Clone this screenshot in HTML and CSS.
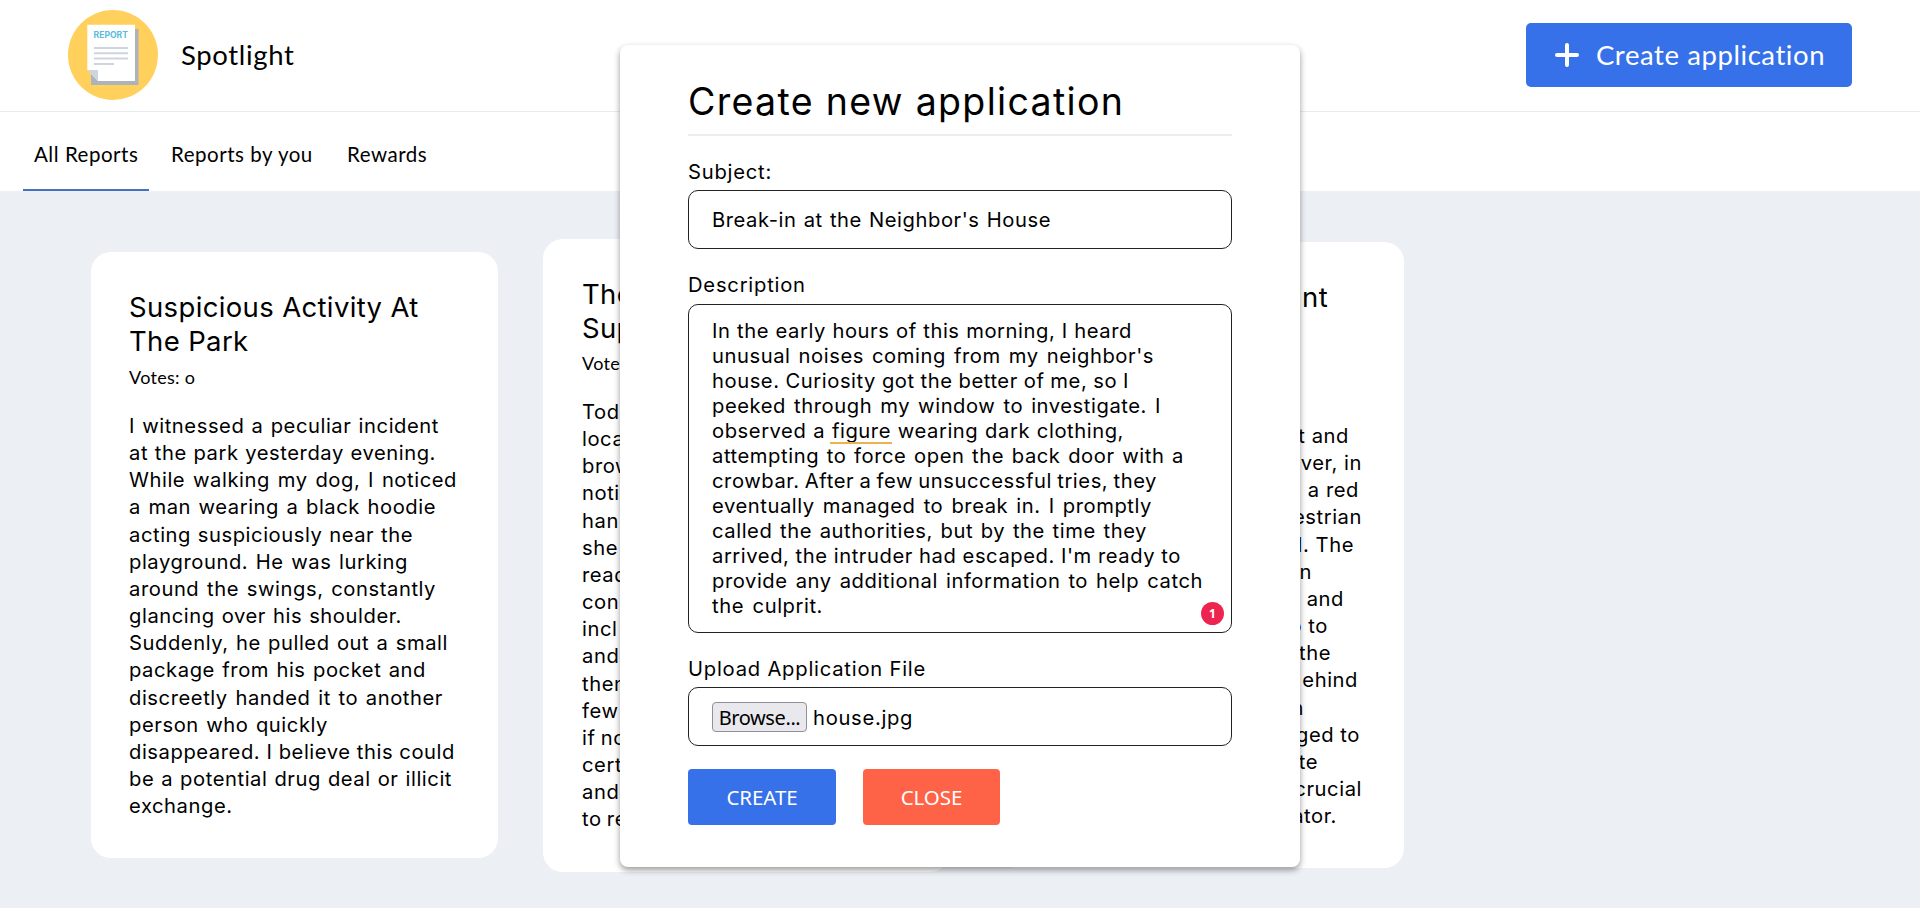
FILE: index.html
```html
<!DOCTYPE html>
<html lang="en">
<head>
<meta charset="utf-8">
<title>Spotlight</title>
<link rel="stylesheet" href="styles.css">
</head>
<body>
<header class="header">
  <div class="brand">
    <svg class="logo" viewBox="0 0 90 90">
      <circle cx="45" cy="45" r="45" fill="#ffd05b"/>
      <path d="M23 19H70.5V75H23z" fill="#acb3ba"/>
      <path d="M19.300 14.700H67V71H30L19.300 60z" fill="#fff"/>
      <path d="M19.300 60H30V71z" fill="#cdd6e0"/>
      <path d="M19.300 60V75H23V64z" fill="#ffd05b"/>
      <path d="M26 38H60M26 43.300H60M26 48.600H60M26 54H46" stroke="#cdd6e0" stroke-width="2"/>
      <text class="logo-text" x="25.500" y="28" textLength="34.500" lengthAdjust="spacingAndGlyphs">REPORT</text>
    </svg>
    <span class="brand-name">Spotlight</span>
  </div>
  <button class="new-button">
    <svg class="plus" viewBox="0 0 24 24"><path d="M12 2V22M2 12H22" stroke="#fff" stroke-width="4" stroke-linecap="round"/></svg>
    <span>Create application</span>
  </button>
</header>
<nav class="tabs">
  <a class="tab active">All Reports</a>
  <a class="tab by-you">Reports by you</a>
  <a class="tab rewards">Rewards</a>
</nav>
<main class="cards">
  <article class="card first">
    <h2 class="card-title">Suspicious Activity At<br>The Park</h2>
    <div class="votes">Votes: o</div>
    <div class="story">
      <span class="line" style="width:310px">I witnessed a peculiar incident</span>
      <span class="line" style="width:307px">at the park yesterday evening.</span>
      <span class="line" style="width:328px">While walking my dog, I noticed</span>
      <span class="line" style="width:307px">a man wearing a black hoodie</span>
      <span class="line" style="width:284px">acting suspiciously near the</span>
      <span class="line" style="width:279px">playground. He was lurking</span>
      <span class="line" style="width:307px">around the swings, constantly</span>
      <span class="line" style="width:273px">glancing over his shoulder.</span>
      <span class="line" style="width:319px">Suddenly, he pulled out a small</span>
      <span class="line" style="width:297px">package from his pocket and</span>
      <span class="line" style="width:314px">discreetly handed it to another</span>
      <span class="line" style="width:199px">person who quickly</span>
      <span class="line" style="width:326px">disappeared. I believe this could</span>
      <span class="line" style="width:323px">be a potential drug deal or illicit</span>
      <span class="line" style="width:105px">exchange.</span>
    </div>
  </article>
  <article class="card second">
    <h2 class="card-title">The<br>Sup</h2>
    <div class="votes">Votes: o</div>
    <p class="story">Tod<br>loca<br>brow<br>noti<br>han<br>she<br>read<br>con<br>incl<br>and<br>then<br>few<br>if no<br>cert<br>and<br>to re</p>
  </article>
  <article class="card third">
    <h2 class="card-title"><span class="tail" style="margin-right:38px">nt</span></h2>
    <div class="story">
      <span class="tail" style="margin-right:17px">t and</span>
      <span class="tail" style="margin-right:4px">iver, in</span>
      <span class="tail" style="margin-right:7px">n a red</span>
      <span class="tail" style="margin-right:4px">estrian</span>
      <span class="tail" style="margin-right:12px">d. The</span>
      <span class="tail" style="margin-right:54px">in</span>
      <span class="tail" style="margin-right:22px">and</span>
      <span class="tail" style="margin-right:38px">o to</span>
      <span class="tail" style="margin-right:35px">the</span>
      <span class="tail" style="margin-right:8px">ehind</span>
      <span class="tail" style="margin-right:62px">in</span>
      <span class="tail" style="margin-right:6px">ged to</span>
      <span class="tail" style="margin-right:48px">te</span>
      <span class="tail" style="margin-right:4px">crucial</span>
      <span class="tail" style="margin-right:29px">ator.</span>
    </div>
  </article>
</main>
<section class="modal">
  <h1 class="modal-title">Create new application</h1>
  <label class="label">Subject:</label>
  <div class="field subject"><span class="line" style="width:339px">Break-in at the Neighbor's House</span></div>
  <label class="label">Description</label>
  <div class="field description">
    <span class="line" style="width:420px">In the early hours of this morning, I heard</span>
    <span class="line" style="width:442px">unusual noises coming from my neighbor's</span>
    <span class="line" style="width:417px">house. Curiosity got the better of me, so I</span>
    <span class="line" style="width:449px">peeked through my window to investigate. I</span>
    <span class="line" style="width:412px">observed a <span class="flagged">figure</span> wearing dark clothing,</span>
    <span class="line" style="width:472px">attempting to force open the back door with a</span>
    <span class="line" style="width:445px">crowbar. After a few unsuccessful tries, they</span>
    <span class="line" style="width:440px">eventually managed to break in. I promptly</span>
    <span class="line" style="width:435px">called the authorities, but by the time they</span>
    <span class="line" style="width:469px">arrived, the intruder had escaped. I'm ready to</span>
    <span class="line" style="width:491px">provide any additional information to help catch</span>
    <span class="line" style="width:111px">the culprit.</span>
    <span class="badge">1</span>
  </div>
  <label class="label">Upload Application File</label>
  <div class="field upload"><span class="browse">Browse...</span><span class="file-name">house.jpg</span></div>
  <div class="actions">
    <button class="action create">CREATE</button>
    <button class="action close">CLOSE</button>
  </div>
</section>
</body>
</html>
```

FILE: styles.css
```css
* { box-sizing: border-box; }

body {
  margin: 0;
  height: 908px;
  overflow: hidden;
  background: #ecf0f5;
  color: #000;
  font-family: Inter, sans-serif;
}

.header {
  display: flex;
  justify-content: space-between;
  align-items: center;
  height: 112px;
  padding: 0 68px 2px;
  background: #fff;
  border-bottom: 1px solid #e9ebee;
}

.brand { display: flex; align-items: center; gap: 23px; }
.logo { width: 90px; height: 90px; }
.logo-text { font: 700 8.500px Inter, sans-serif; fill: #5bbcdc; }
.brand-name { font: 27.500px/34px Lato, sans-serif; letter-spacing: 0.650px; }

.new-button {
  display: flex;
  align-items: center;
  gap: 17px;
  width: 326px;
  height: 64px;
  padding: 0 0 0 29px;
  border: 0;
  border-radius: 5px;
  background: #3671e9;
  color: #fff;
  font: 27.500px/34px Lato, sans-serif;
  letter-spacing: 0.580px;
  white-space: nowrap;
}
.plus { width: 24px; height: 24px; }

.tabs {
  display: flex;
  height: 79px;
  padding-left: 23px;
  background: #fff;
  font: 20.500px/24px Lato, sans-serif;
  letter-spacing: 0.530px;
}
.tab { padding: 30px 0 0 11px; white-space: nowrap; }
.tab.active { width: 126px; border-bottom: 2px solid #4671c0; }
.tab.by-you { width: 176px; padding-left: 22px; }
.tab.rewards { padding-left: 22px; }

.cards { display: flex; align-items: flex-start; padding-left: 91px; }
.card {
  flex: none;
  width: 407px;
  padding: 38px 38px 0;
  border-radius: 20px;
  background: #fff;
  overflow: hidden;
  white-space: nowrap;
}
.first { height: 606px; margin-top: 61px; }
.second { height: 633px; margin: 48px 0 0 45px; padding-left: 39px; }
.third { height: 626px; margin: 51px 0 0 47px; }
.card-title { margin: 0 0 7px; font-size: 27.500px; line-height: 34px; font-weight: 400; letter-spacing: 0.350px; }
.second .card-title { margin-bottom: 6px; }
.votes { font: 18px/24px Lato, sans-serif; letter-spacing: 0.300px; }
.story { margin: 23px 0 0; font-size: 20.200px; line-height: 27.150px; letter-spacing: 0.560px; word-spacing: -1px; }
.third .card-title { height: 68px; }
.third .story { margin-top: 74px; }
.line { display: block; text-align: justify; text-align-last: justify; }
.tail { display: block; text-align: right; word-spacing: 0; }

.modal {
  position: absolute;
  left: 620px;
  top: 45px;
  width: 680px;
  height: 822px;
  padding: 35px 68px 0;
  border-radius: 8px;
  background: #fff;
  box-shadow: 0 3px 6px rgba(0, 0, 0, 0.400);
  white-space: nowrap;
}
.modal-title {
  margin: 0;
  height: 56px;
  border-bottom: 2px solid #ededed;
  font-size: 37.500px;
  line-height: 44px;
  font-weight: 400;
  letter-spacing: 1.330px;
}
.label { display: block; margin-top: 23px; font-size: 20.200px; line-height: 25px; letter-spacing: 0.780px; }
.field {
  position: relative;
  margin-top: 6px;
  padding: 0 23px;
  border: 1px solid #222;
  border-radius: 10px;
  font-size: 20.200px;
  line-height: 25px;
  letter-spacing: 0.560px;
  word-spacing: -1px;
}
.subject { height: 59px; padding-top: 16px; }
.description { height: 329px; margin-top: 7px; padding-top: 13px; }
.flagged { position: relative; }
.flagged::after {
  content: "";
  position: absolute;
  left: -2px;
  right: -1px;
  bottom: -1px;
  height: 2px;
  background: #eeb150;
}
.badge {
  position: absolute;
  right: 7px;
  bottom: 7px;
  width: 23px;
  height: 23px;
  border-radius: 50%;
  background: #ee2450;
  color: #fff;
  font: 700 12px/23px "Open Sans", sans-serif;
  letter-spacing: 0;
  text-align: center;
}
.upload { display: flex; align-items: center; gap: 6px; height: 59px; }
.file-name { padding-top: 2px; letter-spacing: 0.700px; }
.browse {
  width: 95px;
  height: 30px;
  border: 1px solid #8f8f9d;
  border-radius: 4px;
  background: #e9e9ed;
  font: 20px/29px "Noto Sans", sans-serif;
  letter-spacing: -0.400px;
  text-align: center;
}
.actions { display: flex; gap: 27px; margin-top: 23px; }
.action {
  width: 148px;
  height: 56px;
  padding: 0;
  border: 0;
  border-radius: 4px;
  background: #3671e9;
  color: #fff;
  font: 20.500px/56px "Noto Sans", sans-serif;
  letter-spacing: -0.100px;
}
.action.close { width: 137px; background: #ff6347; }
```
